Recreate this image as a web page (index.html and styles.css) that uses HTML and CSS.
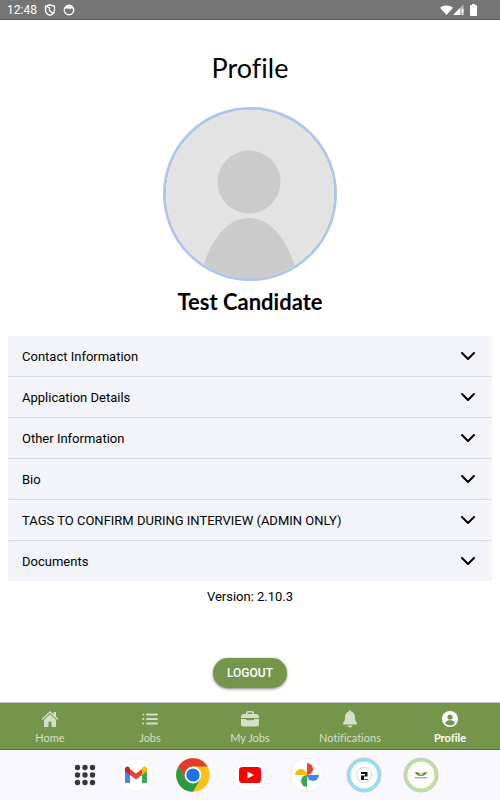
FILE: index.html
```
<!DOCTYPE html>
<html lang="en">
<head>
    <meta charset="UTF-8">
    <meta name="viewport" content="width=device-width, initial-scale=1.0">
    <title>Profile</title>
    <link rel="stylesheet" href="styles.css">
</head>
<body>
    <!-- Device status bar -->
    <header class="status-bar">
        <div class="status-group">
            <span>12:48</span>
            <svg width="12" height="12" viewBox="0 0 12 12" fill="none" stroke="#fff" stroke-width="1.3">
                <path d="M6 .8 10.5 2.3V6c0 2.600-2 4.500-4.500 5.300C3.500 10.500 1.500 8.600 1.500 6V2.300z"/>
                <path d="M2.500 2.500 5.500 4v2.500L9 9.500"/>
            </svg>
            <svg width="12" height="12" viewBox="0 0 12 12" fill="none" stroke="#fff" stroke-width="1.4">
                <circle cx="6" cy="6" r="4.700"/>
                <path d="M2.500 2.500h7v2l-1.200-.5-1.100.8L6 4l-1.200.8L3.700 4l-1.200.5z" fill="#fff" stroke-width=".6"/>
            </svg>
        </div>
        <div class="status-group status-right">
            <svg width="13" height="12" viewBox="0 0 14 12" fill="#fff"><path d="M0 3.500C4 .2 10 .2 14 3.500L7 11.500z"/></svg>
            <svg width="11" height="12" viewBox="0 0 11 12" fill="#fff"><path d="M0 11 10.500 .5V11z" opacity=".5"/><path d="M0 11 7 4v7zM9 5h1.500v4H9zM9 10h1.500v1H9z"/></svg>
            <svg class="battery" width="7" height="12" viewBox="0 0 7 12" fill="#fff"><path d="M2 0h3v1h1q1 0 1 1v9q0 1-1 1H1q-1 0-1-1V2q0-1 1-1h1z"/></svg>
        </div>
    </header>

    <main class="content">
        <h1 class="page-title">Profile</h1>

        <!-- Placeholder profile picture -->
        <div class="avatar">
            <svg viewBox="0 0 168 168" role="img" aria-label="Profile picture">
                <rect width="168" height="168" fill="#e3e3e3"/>
                <circle cx="83" cy="72" r="31.500" fill="#cbcbcb"/>
                <path d="M34 168C43 130 61 108 83 108s40 22 49 60z" fill="#cbcbcb"/>
            </svg>
        </div>
        <h2 class="user-name">Test Candidate</h2>

        <!-- Collapsed sections -->
        <div class="sections">
            <button class="section-row" type="button">Contact Information
                <svg class="chevron" viewBox="0 0 14 9"><path d="m1 1 6 6 6-6"/></svg>
            </button>
            <button class="section-row" type="button">Application Details
                <svg class="chevron" viewBox="0 0 14 9"><path d="m1 1 6 6 6-6"/></svg>
            </button>
            <button class="section-row" type="button">Other Information
                <svg class="chevron" viewBox="0 0 14 9"><path d="m1 1 6 6 6-6"/></svg>
            </button>
            <button class="section-row" type="button">Bio
                <svg class="chevron" viewBox="0 0 14 9"><path d="m1 1 6 6 6-6"/></svg>
            </button>
            <button class="section-row" type="button">TAGS TO CONFIRM DURING INTERVIEW (ADMIN ONLY)
                <svg class="chevron" viewBox="0 0 14 9"><path d="m1 1 6 6 6-6"/></svg>
            </button>
            <button class="section-row" type="button">Documents
                <svg class="chevron" viewBox="0 0 14 9"><path d="m1 1 6 6 6-6"/></svg>
            </button>
        </div>

        <p class="version">Version: 2.10.3</p>
        <button class="logout" type="button">LOGOUT</button>
    </main>

    <!-- Tab bar -->
    <nav class="tabs">
        <a class="tab" href="#">
            <svg width="18" height="18" viewBox="0 0 18 18" fill="currentColor">
                <path d="M9 1 .5 9l.9 1L9 3l7.600 7 .9-1L15 6.600V2h-2.500v2.300z"/>
                <path d="M9 4.300 3 9.800V17h4.500v-5.500h3V17H15V9.800z"/>
            </svg>
            Home
        </a>
        <a class="tab" href="#">
            <svg width="18" height="18" viewBox="0 0 18 18" fill="none" stroke="currentColor" stroke-width="2" stroke-linecap="round">
                <path d="M6 4.500h10M6 9h10M6 13.500h10M2.200 4.500h.1M2.200 9h.1M2.200 13.500h.1"/>
            </svg>
            Jobs
        </a>
        <a class="tab" href="#">
            <svg width="18" height="18" viewBox="0 0 18 18" fill="currentColor">
                <path d="M5 4V3q0-2 2-2h4q2 0 2 2v1h2q3 0 3 3v1H0V7q0-3 3-3zm1.500 0h5V3q0-.6-.6-.6H7.100q-.6 0-.6.600z"/>
                <path d="M0 9h5v.5q0 .8.8.8h6.400q.8 0 .8-.8V9h5v5q0 2.500-2.500 2.500h-13Q0 16.500 0 14z"/>
            </svg>
            My Jobs
        </a>
        <a class="tab" href="#">
            <svg width="18" height="18" viewBox="0 0 18 18" fill="currentColor">
                <path d="M9 .5c.9 0 1.300.6 1.400 1.200C13 2.400 14 4.600 14 7c0 3.500.8 4.500 1.800 5.800.7 1 .2 1.700-.8 1.700H3c-1 0-1.500-.7-.8-1.700C3.200 11.500 4 10.500 4 7c0-2.400 1-4.600 3.600-5.300C7.700 1.100 8.100.5 9 .5zM6.500 15.500h5C11.200 16.800 10.200 17.500 9 17.500s-2.200-.7-2.500-2z"/>
            </svg>
            Notifications
        </a>
        <a class="tab active" href="#">
            <svg width="18" height="18" viewBox="0 0 18 18">
                <circle cx="9" cy="9" r="8" fill="#fff"/>
                <circle cx="9" cy="7" r="2.600" fill="#75964a"/>
                <path d="M4 13.200c1-2.500 3-3 5-3s4 .5 5 3c-2.600 2.800-7.400 2.800-10 0z" fill="#75964a"/>
            </svg>
            Profile
        </a>
    </nav>

    <!-- App dock -->
    <footer class="dock">
        <svg width="24" height="36" viewBox="6 0 24 36" fill="#34343c">
            <circle cx="10.500" cy="10.500" r="2.700"/><circle cx="18" cy="10.500" r="2.700"/><circle cx="25.500" cy="10.500" r="2.700"/>
            <circle cx="10.500" cy="18" r="2.700"/><circle cx="18" cy="18" r="2.700"/><circle cx="25.500" cy="18" r="2.700"/>
            <circle cx="10.500" cy="25.500" r="2.700"/><circle cx="18" cy="25.500" r="2.700"/><circle cx="25.500" cy="25.500" r="2.700"/>
        </svg>
        <!-- Mail -->
        <svg width="36" height="36" viewBox="0 0 36 36">
            <circle cx="18" cy="18" r="16.500" fill="#fff" stroke="#f0eff4"/>
            <path d="M7 12v12.500Q7 26 8.500 26H12V15z" fill="#4285f4"/>
            <path d="M24 15v11h3.500q1.500 0 1.500-1.500V12z" fill="#34a853"/>
            <path d="m12 12 6 4.500 6-4.500v6l-6 4.500-6-4.500z" fill="#ea4335"/>
            <path d="M24 12v6l5-3.750V12c0-2.200-2.300-3.200-4-2z" fill="#fbbc04"/>
            <path d="M7 12v2.250L12 18v-6l-1-2.000-.5-.0C9 9 7 10 7 12z" fill="#c5221f"/>
            <path d="m10.500 10 1.500 1.200V12.500z" fill="#ea4335"/>
        </svg>
        <!-- Browser -->
        <svg width="36" height="36" viewBox="0 0 36 36">
            <circle cx="18" cy="18" r="16.800" fill="#fbc116"/>
            <path d="M3.450 9.600A16.800 16.800 0 0 1 32.550 9.600H18L10.700 22.200z" fill="#e33b2e"/>
            <path d="M3.450 9.600A16.800 16.800 0 0 0 18 34.800l7.300-12.600H10.700z" fill="#2a9a47"/>
            <circle cx="18" cy="18" r="8.400" fill="#fff"/>
            <circle cx="18" cy="18" r="6.600" fill="#1a73e8"/>
        </svg>
        <!-- Video -->
        <svg width="36" height="36" viewBox="0 0 36 36">
            <circle cx="18" cy="18" r="16.500" fill="#fff" stroke="#f0eff4"/>
            <rect x="7" y="10" width="22" height="16" rx="3.500" fill="#f00"/>
            <path d="m15.500 14.500 6.500 3.500-6.500 3.500z" fill="#fff"/>
        </svg>
        <!-- Photos -->
        <svg width="36" height="36" viewBox="0 0 36 36">
            <circle cx="18" cy="18" r="16.500" fill="#fff" stroke="#f0eff4"/>
            <path d="M18 6a6 6 0 0 1 0 12z" fill="#ea4335"/>
            <path d="M30 18a6 6 0 0 1-12 0z" fill="#4285f4"/>
            <path d="M18 30a6 6 0 0 1 0-12z" fill="#34a853"/>
            <path d="M6 18a6 6 0 0 1 12 0z" fill="#fbbc04"/>
        </svg>
        <svg width="36" height="36" viewBox="0 0 36 36">
            <circle cx="18" cy="18" r="17" fill="#8fdff0" stroke="#c9c6d0"/>
            <circle cx="18" cy="18" r="13.500" fill="#fff"/>
            <circle cx="18" cy="18" r="7.500" fill="none" stroke="#aaa" stroke-width=".7" stroke-dasharray="2 1"/>
            <path d="M15 15h6.500v4.500H18V23h-3v-4.500h4v-1.500h-4z" fill="#111"/>
            <path d="M18.500 22.500h3.500" stroke="#444"/>
        </svg>
        <svg width="36" height="36" viewBox="0 0 36 36">
            <circle cx="18" cy="18" r="17" fill="#bce095" stroke="#c9c6d0"/>
            <circle cx="18" cy="18" r="13.500" fill="#fff"/>
            <path d="M12 15c2 0 3 .2 4 1h4c1-.8 2-1 4-1-.5 2.500-3 4-6 4s-5.500-1.500-6-4z" fill="#5d9335"/>
            <path d="M15.500 16.800q2.500-1.200 5 0L18 18.200z" fill="#e8f3dc"/>
            <path d="M12 20.800h12" stroke="#667060" stroke-width="1" stroke-dasharray="1.500 .3"/>
        </svg>
    </footer>
</body>
</html>
```
FILE: styles.css
```
body {
    margin: 0;
    background-color: #fff;
    color: #000;
    font-family: Roboto, sans-serif;
    font-size: 13px;
    display: flex;
    flex-direction: column;
    min-height: 100vh;
}

svg {
    display: block;
    flex-shrink: 0;
}

/* Device status bar */
.status-bar {
    display: flex;
    justify-content: space-between;
    align-items: center;
    box-sizing: border-box;
    height: 20px;
    padding: 0 23px 0 7px;
    background-color: #757575;
    border-bottom: 1px solid #5c5759;
    color: #fff;
    font-size: 12px;
}

.status-group {
    display: flex;
    align-items: center;
    gap: 7px;
}

.status-right {
    gap: 0;
}

.battery {
    margin-left: 6px;
}

/* Main content */
.content {
    flex: 1;
    display: flex;
    flex-direction: column;
    align-items: center;
    padding: 32px 8px 14px;
}

.page-title,
.user-name {
    margin: 0;
    font-family: Lato, sans-serif;
    font-variant-ligatures: none;
}

.page-title {
    font-size: 27px;
    font-weight: 400;
    line-height: 32px;
}

.avatar {
    box-sizing: border-box;
    width: 174px;
    height: 174px;
    margin: 23px 0 9px;
    border: 3px solid #afc5e9;
    border-radius: 50%;
    overflow: hidden;
}

.user-name {
    font-size: 22px;
    font-weight: 700;
    line-height: 24px;
}

/* Accordion rows */
.sections {
    align-self: stretch;
    margin-top: 22px;
}

.section-row {
    display: flex;
    justify-content: space-between;
    align-items: center;
    box-sizing: border-box;
    width: 100%;
    height: 41px;
    padding: 0 17px 0 14px;
    border: none;
    border-bottom: 1px solid #d9dade;
    background-color: #f3f4f9;
    color: #000;
    font-family: inherit;
    font-size: 13px;
    text-align: left;
    cursor: pointer;
}

.section-row:last-child {
    height: 40px;
    border-bottom: none;
}

.chevron {
    width: 14px;
    height: 9px;
    fill: none;
    stroke: #000;
    stroke-width: 2;
    stroke-linecap: round;
    stroke-linejoin: round;
}

.version {
    margin: 8px 0;
    line-height: 16px;
}

.logout {
    height: 30px;
    margin-top: auto;
    padding: 0 14px;
    border: none;
    border-radius: 15px;
    background-color: #75964a;
    box-shadow: 0 1px 3px rgba(0, 0, 0, 0.5);
    color: #fff;
    font-family: inherit;
    font-size: 12px;
    font-weight: 500;
    cursor: pointer;
}

/* Tab bar */
.tabs {
    display: flex;
    box-sizing: border-box;
    height: 48px;
    background-color: #75964a;
    border-top: 1px solid #c4c9bd;
    border-bottom: 1px solid #588000;
}

.tab {
    flex: 1;
    display: flex;
    flex-direction: column;
    align-items: center;
    gap: 2px;
    padding-top: 7px;
    color: #d5dfc8;
    font-family: Lato, sans-serif;
    font-size: 11px;
    font-variant-ligatures: none;
    line-height: 16px;
    text-decoration: none;
}

.tab.active {
    color: #fff;
    font-weight: 700;
}

/* App dock */
.dock {
    display: flex;
    justify-content: center;
    align-items: center;
    gap: 21px;
    height: 50px;
    padding-left: 12px;
    background-color: #faf8ff;
}
```
